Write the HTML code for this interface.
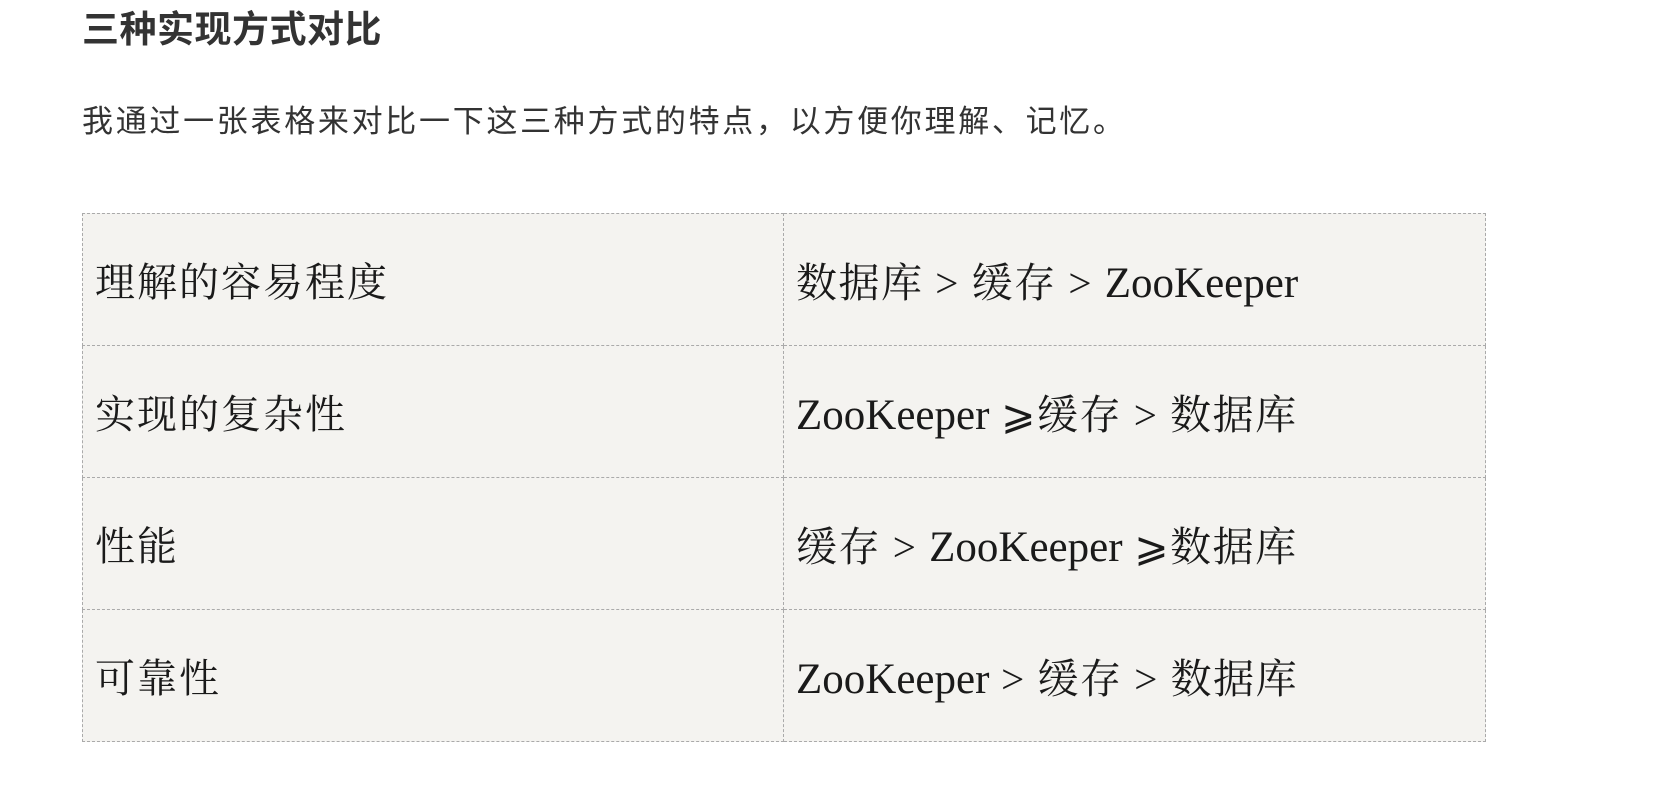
<!DOCTYPE html>
<html><head><meta charset="utf-8"><style>
html,body{margin:0;padding:0;background:#fff;width:1662px;height:790px;overflow:hidden}
h2{position:absolute;left:82px;top:8px;margin:0;font:bold 37px/44px "Liberation Sans","Noto Sans CJK SC",sans-serif;color:#333;letter-spacing:0.5px}
p{position:absolute;left:82px;top:100px;margin:0;font:31px/44px "Liberation Sans","Noto Sans CJK SC",sans-serif;color:#333;letter-spacing:2.7px}
table{position:absolute;left:82px;top:213px;border-collapse:collapse;width:1404px;background:#f4f3f0}
td{border:1px dashed #aaa;height:131px;padding:0 0 0 12px;font:41px "Liberation Serif","Noto Serif CJK SC",serif;color:#1a1a1a;vertical-align:middle;letter-spacing:1.5px}
td:first-child{width:688px;letter-spacing:2px;font-size:40px}
.l{font-size:43px;letter-spacing:0}
</style></head><body>
<h2>三种实现方式对比</h2>
<p>我通过一张表格来对比一下这三种方式的特点，以方便你理解、记忆。</p>
<table>
<tr><td>理解的容易程度</td><td>数据库 &gt; 缓存 &gt; <span class="l">ZooKeeper</span></td></tr>
<tr><td>实现的复杂性</td><td><span class="l">ZooKeeper</span> ⩾缓存 &gt; 数据库</td></tr>
<tr><td>性能</td><td>缓存 &gt; <span class="l">ZooKeeper</span> ⩾数据库</td></tr>
<tr><td>可靠性</td><td><span class="l">ZooKeeper</span> &gt; 缓存 &gt; 数据库</td></tr>
</table>
</body></html>
